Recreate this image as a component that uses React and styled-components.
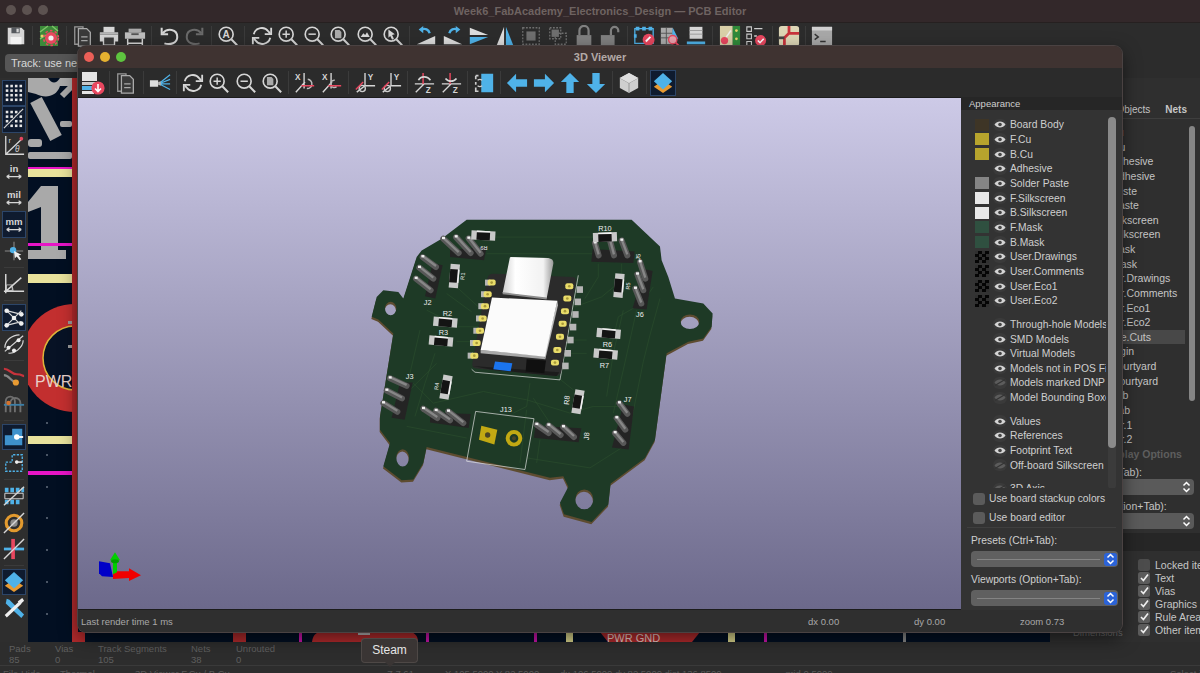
import React from "react";
import styled, { createGlobalStyle } from "styled-components";

const W = "#d6d6d6";
const B = "#4fb2e8";
const P = "#e8475f";

const Global = createGlobalStyle`
  html, body { margin: 0; padding: 0; background: #2a2a2a; }
  body { font-family: "Liberation Sans", Arial, sans-serif; overflow: hidden; }
`;

const Ic = ({ children, size = 22 }) => (
  <svg width={size} height={size} viewBox="0 0 24 24" fill="none">{children}</svg>
);

const Mag = ({ children, c = W }) => (
  <Ic>
    <circle cx="10" cy="10" r="7.6" stroke={c} strokeWidth="1.8" />
    <path d="M15.6 15.6 22 22" stroke={c} strokeWidth="2.2" />
    {children}
  </Ic>
);

const ZoomIn = () => <Mag><path d="M10 6v8M6 10h8" stroke={W} strokeWidth="1.6" /></Mag>;
const ZoomOut = () => <Mag><path d="M6 10h8" stroke={W} strokeWidth="1.6" /></Mag>;
const ZoomFit = () => <Mag><path d="M6.5 5.5h5l2 2v7h-7z" fill="#aaa" /></Mag>;
const ZoomObj = () => <Mag><path d="M5 13l3-4 2 2 2-3 3 5z" fill={W} /></Mag>;
const ZoomSel = () => <Mag><path d="M7 5l7 5-3 1 2 4-2 1-2-4-2 2z" fill={W} /></Mag>;
const Find = () => (
  <Mag>
    <text x="10" y="14" textAnchor="middle" fontSize="11" fontWeight="700" fill={W} fontFamily="Liberation Sans">A</text>
  </Mag>
);
const Refresh = () => (
  <Ic>
    <path d="M3 10a9 9 0 0 1 16-3l2 2.5M21 14a9 9 0 0 1-16 3l-2-2.5" stroke={W} strokeWidth="2" />
    <path d="M22 3v7h-7M2 21v-7h7" stroke={W} strokeWidth="2" />
  </Ic>
);
const Save = () => (
  <Ic>
    <path d="M3 3h15l3 3v15H3z" fill={W} />
    <path d="M7 3h9v6H7z" fill="#55595e" />
    <path d="M12.5 4h2.5v4h-2.5z" fill={W} />
    <path d="M6 13h12v8H6z" fill="#f2f2f2" />
  </Ic>
);
const BoardSetup = () => (
  <Ic size={24}>
    <path d="M3 2h18v20H3z" fill="#3c8a3a" />
    <path d="M3 8l8-6M3 15l6-4M15 2l6 5" stroke="#7fc46a" strokeWidth="1.4" />
    <circle cx="14" cy="14" r="6" fill={P} />
    <circle cx="14" cy="14" r="7.4" stroke={P} strokeWidth="1.6" strokeDasharray="2.5 2.3" />
    <circle cx="14" cy="14" r="2.6" fill="#f0f0f0" />
    <circle cx="5" cy="12" r="1.5" fill="#e6d36a" />
  </Ic>
);
const Pages = () => (
  <Ic>
    <path d="M3 2h9v19H3z" stroke="#999" strokeWidth="1.4" />
    <path d="M7 4h9l4 4v15H7z" fill="#3a3a3a" stroke="#aaa" strokeWidth="1.4" />
    <path d="M10 13h7M10 17h7" stroke="#aaa" strokeWidth="1.2" />
  </Ic>
);
const Printer = () => (
  <Ic>
    <path d="M6 2h12v6H6z" fill={W} />
    <path d="M2 8h20v10H2z" fill={W} />
    <path d="M6 13h12v9H6z" fill="#3a3a3a" stroke={W} strokeWidth="1.5" />
    <path d="M2 10h20" stroke="#777" />
  </Ic>
);
const Plotter = () => (
  <Ic>
    <path d="M5 4h14v4H5z" fill="#aaa" />
    <path d="M1 8h22v7H1z" fill="#bdbdbd" />
    <path d="M4 15v8M20 15v8M4 20h16" stroke={W} strokeWidth="1.6" />
    <path d="M8 10h8" stroke="#555" strokeWidth="2" />
  </Ic>
);
const Undo = ({ dim, flip }) => (
  <Ic>
    <g transform={flip ? "translate(24 0) scale(-1 1)" : undefined} stroke={dim ? "#6a6a6a" : W} strokeWidth="2.2">
      <path d="M5 9c5-6 16-5 16 4 0 7-8 9-14 7" />
      <path d="M4 3v7h7" />
    </g>
  </Ic>
);
const RotateBoard = ({ flip }) => (
  <Ic>
    <g transform={flip ? "translate(24 0) scale(-1 1)" : undefined}>
      <path d="M2 21L22 12v9z" fill="#ddd" />
      <path d="M16 9c-1-4-5-6-9-4" stroke={B} strokeWidth="2.6" />
      <path d="M9 1L4 5l5 4z" fill={B} />
    </g>
  </Ic>
);
const MirrorH = () => (
  <Ic><path d="M2 3l20 8H2z" fill="#ddd" /><path d="M2 13h20L2 21z" fill={B} /></Ic>
);
const MirrorV = () => (
  <Ic><path d="M11 2v20H3z" fill="#ddd" /><path d="M13 2v20h8z" fill={B} /></Ic>
);
const Group = ({ small }) => (
  <Ic>
    <path d={small ? "M3 3h12v12H3zM9 9h12v12H9z" : "M3 3h18v18H3z"} stroke="#6f6f6f" strokeWidth="1.4" strokeDasharray="2 1.5" />
    <path d={small ? "M5 5h8v8H5z" : "M7 7h10v10H7z"} fill="#6f6f6f" />
  </Ic>
);
const Lock = ({ open }) => (
  <Ic>
    <path d={open ? "M13 11V6a4 4 0 0 1 8 0v2" : "M7 11V6a5 5 0 0 1 10 0v5"} stroke="#808080" strokeWidth="2.4" />
    <path d={open ? "M2 11h15v11H2z" : "M4 11h16v11H4z"} fill="#808080" />
  </Ic>
);
const DrcBoard = () => (
  <Ic>
    <path d="M2 4h20v16H2z" stroke={B} strokeWidth="1.4" />
    <path d="M3 2h4v4H3zM10 2h4v4h-4zM17 2h4v4h-4zM1 10h3v4H1z" fill={B} />
    <circle cx="17" cy="16" r="6.5" fill={P} />
    <path d="M14 18l5-5" stroke="#fff" strokeWidth="2" />
  </Ic>
);
const Library = () => (
  <Ic>
    <path d="M2 3h13v18H2z" fill="#aaa" />
    <path d="M2 9h13M2 14h13M8 3v18" stroke="#555" />
    <path d="M15 3l6 12h-7z" fill={B} />
    <circle cx="15" cy="16" r="4.5" fill="#e8a0ac" stroke={P} strokeWidth="1.5" />
    <path d="M18 19l4 4" stroke={P} strokeWidth="2" />
  </Ic>
);
const Stackup = () => (
  <Ic>
    <path d="M5 2h14v13H5z" fill={W} />
    <path d="M5 6h14M5 10h14" stroke="#999" />
    <path d="M2 18h20v3H2z" fill={B} />
  </Ic>
);
const Schematic = () => (
  <Ic>
    <path d="M1 1h14v22H1z" fill="#d9d0a8" />
    <path d="M15 1h8v22h-8z" fill="#2f8a3a" />
    <path d="M3 20l10-14" stroke="#eee" strokeWidth="1.5" />
    <circle cx="6" cy="17" r="4" fill={P} />
    <circle cx="19" cy="6" r="1.5" fill="#e6d36a" />
    <circle cx="19" cy="15" r="1.5" fill="#e6d36a" />
  </Ic>
);
const Checklist = () => (
  <Ic>
    <path d="M2 2h5v5H2zM2 10h5v5H2zM2 18h5v5H2z" stroke="#ccc" strokeWidth="1.2" />
    <path d="M10 4h9M10 12h3" stroke="#ccc" strokeWidth="1.5" />
    <circle cx="17" cy="17" r="6" fill={P} />
    <path d="M14 17l2.4 2.4 4-4.4" stroke="#fff" strokeWidth="1.6" />
  </Ic>
);
const Router = () => (
  <Ic>
    <rect x="1" y="1" width="22" height="22" rx="3" fill="#ddd6b6" />
    <path d="M12 1v8l-5 5v9M12 9h11" stroke="#c8333c" strokeWidth="3" />
    <path d="M1 14h6" stroke="#444" strokeWidth="3" />
  </Ic>
);
const Terminal = () => (
  <Ic>
    <path d="M1 2h22v20H1z" fill="#a8a8a8" />
    <path d="M1 2h22v4H1z" fill="#d0d0d0" />
    <path d="M4 10l4 3-4 3M10 18h6" stroke="#333" strokeWidth="1.5" />
  </Ic>
);
const Export3d = () => (
  <Ic size={24}>
    <path d="M1 1h15v9H1z" fill="#e4e4e4" />
    <path d="M1 11h15v3H1z" fill="#c8c8c8" />
    <path d="M1 15h15v4H1z" fill={B} />
    <path d="M1 20h12v3H1z" fill="#e4e4e4" />
    <circle cx="17" cy="17" r="6.6" fill={P} />
    <path d="M17 13v7M14 17.5l3 3 3-3" stroke="#fff" strokeWidth="1.6" />
  </Ic>
);
const Raytrace = () => (
  <Ic>
    <path d="M1 9h9v7H1z" fill="#ddd" />
    <path d="M10 11l3-1v5l-3-1z" fill="#bbb" />
    <path d="M13 11L23 3M13 12l10-4M13 13h10M13 14l10 5" stroke={B} strokeWidth="1.3" />
  </Ic>
);
const RotAxis = ({ axis, alt }) => (
  <Ic>
    {axis === "X" && (
      <>
        <text x="1" y="9" fontSize="9" fontWeight="700" fill={W} fontFamily="Liberation Sans">X</text>
        <path d="M11 1v17M2 22l10-11" stroke={W} strokeWidth="1.5" />
        <path d={alt ? "M15 9a4 4 0 1 0 2 7" : "M15 8a5 5 0 1 1 -1 10"} stroke="#bbb" strokeWidth="1.6" />
        <path d="M8 15h14" stroke={P} strokeWidth="1.6" />
      </>
    )}
    {axis === "Y" && (
      <>
        <text x="15" y="9" fontSize="9" fontWeight="700" fill={W} fontFamily="Liberation Sans">Y</text>
        <path d="M12 1v14M12 15h11M3 22l9-7" stroke={W} strokeWidth="1.5" />
        <circle cx={alt ? 8 : 9} cy="18" r="3.4" stroke="#ccc" strokeWidth="1.5" />
        <path d="M2 19l8-8" stroke={P} strokeWidth="1.6" />
      </>
    )}
    {axis === "Z" && (
      <>
        <text x="14" y="23" fontSize="9" fontWeight="700" fill={W} fontFamily="Liberation Sans">Z</text>
        <path d="M3 22l9-9M2 13h21" stroke={W} strokeWidth="1.5" />
        <path d="M11 1v12" stroke={P} strokeWidth="1.6" />
        <path d={alt ? "M6 7c3 4 9 4 12 0" : "M6 9c2-5 10-5 13 0"} stroke={W} strokeWidth="1.8" />
      </>
    )}
  </Ic>
);
const Ortho = () => (
  <Ic>
    <path d="M9 2h13v20H9z" fill={B} />
    <path d="M3 4h3M3 4v4M3 11v3M3 17v4h3" stroke="#ccc" strokeWidth="1.8" />
    <path d="M5 9a4 4 0 0 1 5 0M5 15a4 4 0 0 0 5 0" stroke="#ccc" strokeWidth="1.4" />
  </Ic>
);
const Arrow = ({ rot }) => (
  <Ic>
    <path transform={`rotate(${rot} 12 12)`} d="M1 12l10-10v6h12v8H11v6z" fill={B} />
  </Ic>
);
const Cube = () => (
  <Ic>
    <path d="M12 1l10 5.5v11L12 23 2 17.500V6.500z" fill="#cfcfcf" />
    <path d="M12 12l10-5.500M12 12L2 6.500M12 12v11" stroke="#8f8f8f" strokeWidth="1" />
    <path d="M12 1l10 5.500-10 5.500L2 6.500z" fill="#dedede" />
  </Ic>
);
const Layers = () => (
  <Ic>
    <path d="M12 9l10 7-10 7-10-7z" fill="#e89a32" />
    <path d="M12 1l10 9-10 9-10-9z" fill={B} />
  </Ic>
);
const DotGrid = ({ slash }) => (
  <Ic>
    {[3, 8, 13, 18].flatMap((y) => [3, 8, 13, 18].map((x) => <rect key={`${x}-${y}`} x={x} y={y} width="2.8" height="2.8" fill="#e6e6e6" />))}
    {slash && <path d="M1 23L23 1" stroke="#0f1b2f" strokeWidth="3" />}
    {slash && <path d="M1 22L22 1" stroke={W} strokeWidth="1.3" />}
  </Ic>
);
const Polar = () => (
  <Ic>
    <path d="M3 1v20h20M3 21L20 5" stroke={W} strokeWidth="1.4" />
    <circle cx="20" cy="4" r="2" fill={P} />
    <text x="6" y="9" fontSize="8" fill={W} fontFamily="Liberation Sans">r</text>
    <text x="13" y="19" fontSize="9" fontStyle="italic" fill={W} fontFamily="Liberation Sans">θ</text>
  </Ic>
);
const Unit = ({ label }) => (
  <Ic>
    <text x="12" y="12" textAnchor="middle" fontSize="10.500" fontWeight="700" fill={W} fontFamily="Liberation Sans">{label}</text>
    <path d="M4 17h16M4 17l3-2M4 17l3 2M20 17l-3-2M20 17l-3 2" stroke={W} strokeWidth="1.3" />
  </Ic>
);
const CrossCursor = () => (
  <Ic>
    <path d="M12 2v20M2 12h20" stroke="#888" strokeWidth="1.2" />
    <circle cx="11" cy="11" r="3.5" fill={B} />
    <path d="M12 12l8 4-3 1 3 4-2 1-3-4-2 2z" fill="#eee" />
  </Ic>
);
const Angle = () => (
  <Ic>
    <path d="M3 1v21M1 20h22M3 20L20 5" stroke={W} strokeWidth="1.6" />
    <path d="M9 14a9 9 0 0 1 2 6" stroke={W} />
    <rect x="4" y="13" width="6" height="6" stroke={W} strokeWidth="0.8" />
  </Ic>
);
const Ratsnest = () => (
  <Ic>
    <path d="M4 4l16 16M20 4L4 20M4 4l16 4M4 20l16 -4" stroke={W} strokeWidth="1.3" />
    {[[4, 4], [20, 8], [12, 12], [4, 20], [20, 18]].map(([x, y]) => <circle key={x + y} cx={x} cy={y} r="2.5" fill="#eee" />)}
  </Ic>
);
const CurvedNest = () => (
  <Ic>
    <path d="M2 20L22 3M6 22c6 1 16-6 16-14M2 16C2 8 10 2 18 2" stroke={W} strokeWidth="1.3" />
    <circle cx="6" cy="16" r="2.2" fill="#eee" />
    <circle cx="17" cy="8" r="2.2" fill="#eee" />
    <circle cx="12" cy="19" r="2.2" fill="#eee" />
  </Ic>
);
const NetColors = () => (
  <Ic>
    <path d="M1 3c6 0 8 6 14 6s6 2 8 2" stroke="#c8333c" strokeWidth="2.4" />
    <path d="M1 10c6 0 7 7 12 7" stroke="#888" strokeWidth="2.4" />
    <circle cx="14" cy="18" r="3.4" fill="#e89a32" />
  </Ic>
);
const DimVias = () => (
  <Ic>
    <path d="M3 22V10a5 5 0 0 1 10 0v12" stroke="#6f6f6f" strokeWidth="2" />
    <path d="M8 22V12a3 3 0 0 1 11 0v10" stroke="#6f6f6f" strokeWidth="2" />
    <path d="M1 14h22" stroke="#3b7ea6" strokeWidth="2" />
    <circle cx="6" cy="12" r="2.400" fill="#d4722c" />
  </Ic>
);
const ZoneFill = () => (
  <Ic>
    <path d="M2 10h8V3h11v18H2z" fill="#3f92cc" />
    <circle cx="15" cy="12" r="3" fill="#fff" />
    <path d="M15 12h7" stroke="#fff" strokeWidth="2" />
  </Ic>
);
const ZoneOutline = () => (
  <Ic>
    <path d="M3 11h7V3h11v18H3z" stroke={B} strokeWidth="1.5" strokeDasharray="2.500 1.500" />
    <circle cx="15" cy="11" r="2" fill="#eee" />
    <path d="M15 11h6" stroke="#eee" strokeWidth="1.6" />
  </Ic>
);
const PadsSlash = () => (
  <Ic>
    <path d="M2 3h4v5H2zM8 3h4v5H8zM14 3h4v5h-4zM20 3h3v5h-3zM2 16h4v5H2zM8 16h4v5H8zM14 16h4v5h-4z" fill={B} />
    <path d="M2 9h20v6H2z" stroke="#ddd" strokeWidth="1" />
    <path d="M1 22L23 2" stroke={W} strokeWidth="1.5" />
  </Ic>
);
const ViaSlash = () => (
  <Ic>
    <circle cx="12" cy="12" r="8.500" stroke="#e39a2e" strokeWidth="3.400" />
    <circle cx="12" cy="12" r="4" fill="#8a8a8a" />
    <path d="M1 23L23 1" stroke={W} strokeWidth="1.5" />
  </Ic>
);
const TrackSlash = () => (
  <Ic>
    <path d="M1 12h22" stroke={B} strokeWidth="3" />
    <path d="M11 1v22" stroke={P} strokeWidth="4" />
    <path d="M1 23L23 1" stroke={W} strokeWidth="1.5" />
  </Ic>
);
const Wrench = () => (
  <Ic>
    <path d="M4 2l3 1 16 16-3 4L3 7z" fill={B} />
    <path d="M3 21L19 6" stroke="#eee" strokeWidth="3.400" />
    <path d="M21 1l2 3-4 4-3-3z" fill="#eee" />
  </Ic>
);

const Stepper = () => (
  <svg width="9" height="12" viewBox="0 0 9 12" fill="none" stroke="#fff" strokeWidth="1.5">
    <path d="M1.500 4.500L4.500 1.500l3 3M1.500 7.500l3 3 3-3" />
  </svg>
);
const Eye = ({ off }) => (
  <svg width="12" height="9" viewBox="0 0 12 9">
    <path d="M0.500 4.500C3 0.500 9 0.500 11.500 4.500 9 8.500 3 8.500 0.500 4.500z" fill={off ? "#5c5c5c" : "#d4d4d4"} />
    {off ? <path d="M1 7.500L11 1.500" stroke="#333" strokeWidth="1.200" /> : <circle cx="6" cy="4.500" r="1.800" fill="#444" />}
  </svg>
);
const Check = () => (
  <svg width="9" height="9" viewBox="0 0 9 9" fill="none" stroke="#eee" strokeWidth="1.700">
    <path d="M1 5l2.400 2.500L8 1.500" />
  </svg>
);

const Desktop = styled.div`
  position: relative;
  width: 1200px;
  height: 673px;
  overflow: hidden;
`;
const EditorWindow = styled.div`
  display: flex;
  flex-direction: column;
  height: 673px;
  background: #2c2c2c;
`;
const EditorTitle = styled.div`
  position: relative;
  flex: 0 0 23px;
  box-sizing: border-box;
  display: flex;
  align-items: center;
  justify-content: center;
  background: #33282a;
  border-bottom: 1px solid #262020;
  color: #6e6361;
  font-size: 11px;
  font-weight: 700;
`;
const Lights = styled.div`
  position: absolute;
  left: ${(p) => p.$left}px;
  top: ${(p) => p.$top}px;
  display: flex;
  gap: 6px;
`;
const Light = styled.span`
  width: 10px;
  height: 10px;
  border-radius: 50%;
  background: ${(p) => p.$color};
`;
const Toolbar = styled.div`
  display: flex;
  align-items: center;
  flex: 0 0 ${(p) => p.$height}px;
  min-height: 0;
  padding-left: ${(p) => p.$pad}px;
  background: ${(p) => p.$bg || "#2c2c2c"};
`;
const Tool = styled.div`
  flex: 0 0 26.3px;
  height: 26px;
  display: flex;
  align-items: center;
  justify-content: center;
  box-sizing: border-box;
  ${(p) => p.$on && "background: #0f1b2f; border: 1px solid #2c4568;"}
`;
const Sep = styled.div`
  flex: 0 0 7px;
  display: flex;
  justify-content: center;
  align-self: stretch;
  &::after {
    content: "";
    width: 1px;
    margin: 3px 0;
    background: #3b3b3b;
  }
`;
const AuxBar = styled.div`
  flex: 0 0 30px;
  display: flex;
  align-items: center;
  padding-left: 5px;
  box-sizing: border-box;
  background: #2c2c2c;
`;
const TrackSelect = styled.div`
  width: 110px;
  height: 18px;
  line-height: 18px;
  padding-left: 6px;
  box-sizing: border-box;
  border-radius: 4px;
  background: #565656;
  color: #d8d8d8;
  font-size: 11px;
  white-space: nowrap;
`;
const EditorBody = styled.div`
  flex: 1;
  display: flex;
  min-height: 0;
`;
const LeftTools = styled.div`
  flex: 0 0 28px;
  display: flex;
  flex-direction: column;
  align-items: center;
  padding-top: 2px;
  box-sizing: border-box;
  background: #2e2e2e;
`;
const VTool = styled(Tool)`
  flex: 0 0 26.3px;
  width: 24px;
`;
const VSep = styled.div`
  flex: 0 0 7px;
  width: 20px;
  display: flex;
  align-items: center;
  &::after {
    content: "";
    height: 1px;
    width: 100%;
    background: #3b3b3b;
  }
`;
const PcbSvg = styled.svg`
  flex: 1;
  display: block;
  min-width: 0;
  height: 564px;
`;
const SidePanel = styled.div`
  position: relative;
  flex: 0 0 150px;
  min-width: 0;
  overflow: hidden;
  display: flex;
  flex-direction: column;
  background: #2f2f2f;
  color: #c6c6c6;
  font-size: 10.500px;
`;
const Tabs = styled.div`
  display: flex;
  justify-content: flex-end;
  gap: 15px;
  padding: 26px 13px 0 0;
  height: 41px;
  box-sizing: border-box;
  border-bottom: 1px solid #3e3e3e;
  font-size: 10px;
`;
const Tab = styled.span`
  font-weight: ${(p) => (p.$active ? 700 : 400)};
`;
const LayerList = styled.div`
  position: relative;
  padding-top: 6px;
`;
const LayerRow = styled.div`
  height: 14.640px;
  line-height: 14.640px;
  width: 135px;
  padding-left: 52px;
  box-sizing: border-box;
  white-space: nowrap;
  color: ${(p) => (p.$dim ? "#5e5e5e" : "inherit")};
  font-weight: ${(p) => (p.$dim ? 700 : 400)};
  background: ${(p) => (p.$active ? "#484848" : "transparent")};
`;
const SideScroll = styled.div`
  position: absolute;
  right: 5px;
  top: 7px;
  width: 6px;
  height: 275px;
  border-radius: 3px;
  background: #858585;
`;
const SideLabel = styled.div`
  padding: 5px 0 0 4px;
  line-height: 12px;
  white-space: nowrap;
`;
const SideSelect = styled.div`
  align-self: flex-end;
  flex: 0 0 16px;
  width: 140px;
  margin: 1px 6px 0 0;
  border-radius: 4px;
  background: #5a5a5a;
  display: flex;
  align-items: center;
  justify-content: flex-end;
  padding-right: 3px;
  box-sizing: border-box;
`;
const DarkBand = styled.div`
  flex: 0 0 18px;
  margin-top: 4px;
  background: #262626;
`;
const DimensionLabel = styled.div`
  position: absolute;
  left: 23px;
  top: 549px;
  color: #6a6a6a;
  font-size: 9.500px;
`;
const ChecksList = styled.div`
  display: flex;
  flex-direction: column;
  padding: 7px 0 0 88px;
`;
const CheckRow = styled.div`
  display: flex;
  align-items: center;
  gap: 5px;
  height: 13px;
  white-space: nowrap;
  font-size: 10.500px;
`;
const CheckBox = styled.span`
  flex: 0 0 12px;
  height: 12px;
  border-radius: 2.500px;
  background: ${(p) => (p.$on ? "#5c5c5c" : "#4c4c4c")};
  display: flex;
  align-items: center;
  justify-content: center;
`;
const StatusBar = styled.div`
  flex: 0 0 31px;
  min-height: 0;
  overflow: hidden;
  display: flex;
  flex-direction: column;
  background: #2d2d2d;
  color: #5f5f5f;
  font-size: 9.500px;
`;
const StatRow = styled.div`
  flex: 0 0 23px;
  box-sizing: border-box;
  display: flex;
  padding-left: 9px;
  border-bottom: 1px solid #3a3a3a;
`;
const Stat = styled.div`
  width: ${(p) => p.$w}px;
  line-height: 11px;
  padding-top: 1px;
`;
const InfoRow = styled.div`
  display: flex;
  padding: 2px 0 0 3px;
  white-space: nowrap;
  color: #5a5a5a;
`;
const InfoCell = styled.span`
  flex: 0 0 ${(p) => p.$w}px;
`;
const Viewer = styled.div`
  position: absolute;
  left: 78px;
  top: 46px;
  width: 1044px;
  height: 586px;
  display: flex;
  flex-direction: column;
  border-radius: 8px;
  overflow: hidden;
  background: #2e2e2e;
  box-shadow: 0 0 0 1px #4a4242, 0 6px 18px rgba(0, 0, 0, 0.55);
`;
const ViewerTitle = styled.div`
  position: relative;
  flex: 0 0 22px;
  display: flex;
  align-items: center;
  justify-content: center;
  background: #3f3331;
  color: #b3aaa7;
  font-size: 11px;
  font-weight: 700;
`;
const ViewerBody = styled.div`
  flex: 1;
  display: flex;
  min-height: 0;
`;
const Scene = styled.div`
  flex: 1;
  min-width: 0;
  box-sizing: border-box;
  background: linear-gradient(#cdcae7, #6c698b);
  border-top: 1px solid #1c1c1c;
  border-bottom: 1px solid #1c1c1c;
`;
const SceneSvg = styled.svg`
  display: block;
  width: 100%;
  height: 100%;
`;
const Appearance = styled.div`
  position: relative;
  flex: 0 0 161px;
  min-width: 0;
  display: flex;
  flex-direction: column;
  background: #333;
  color: #cfcfcf;
  font-size: 10.300px;
`;
const PanelHead = styled.div`
  flex: 0 0 13px;
  line-height: 13px;
  padding-left: 8px;
  background: #262626;
  font-size: 9.500px;
`;
const ControlList = styled.div`
  position: relative;
  flex: 0 0 378px;
  margin-bottom: 1px;
  overflow: hidden;
  padding-top: 7.500px;
  box-sizing: border-box;
`;
const ControlRow = styled.div`
  display: flex;
  align-items: center;
  height: 14.670px;
  white-space: nowrap;
  width: 145px;
  overflow: hidden;
`;
const Swatch = styled.span`
  flex: 0 0 14px;
  height: 12px;
  margin: 0 4px 0 14px;
  background: ${(p) => p.$color || "transparent"};
  ${(p) => p.$dither && "background: repeating-conic-gradient(#050505 0 25%, #2f2f2f 0 50%) 0 0 / 7px 6px;"}
`;
const EyeSlot = styled.span`
  flex: 0 0 14px;
  height: 12px;
  border-radius: 6px;
  margin-right: 3px;
  display: flex;
  align-items: center;
  justify-content: center;
  background: #3a3a3a;
`;
const GroupGap = styled.div`
  height: ${(p) => p.$h}px;
`;
const ScrollTrack = styled.div`
  position: absolute;
  left: 147px;
  top: 7px;
  width: 8px;
  height: 372px;
  background: #3b3b3b;
  border-radius: 4px;
`;
const PanelScroll = styled.div`
  position: absolute;
  left: 147px;
  top: 7px;
  width: 8px;
  height: 331px;
  border-radius: 4px;
  background: #8a8a8a;
`;
const PanelCheck = styled.div`
  display: flex;
  align-items: center;
  gap: 4px;
  padding-left: 12px;
  flex: 0 0 19px;
`;
const PanelBox = styled.span`
  width: 12px;
  height: 12px;
  border-radius: 3px;
  background: #5b5b5b;
`;
const PanelRule = styled.div`
  flex: 0 0 1px;
  margin: 0 6px 6px;
  background: #3f3f3f;
`;
const PanelLabel = styled.div`
  padding-left: 10px;
  flex: 0 0 13px;
  line-height: 13px;
`;
const SelectBox = styled.div`
  position: relative;
  flex: 0 0 16px;
  margin: 4px 4px 6px 10px;
  border-radius: 4px;
  background: #606060;
  display: flex;
  align-items: center;
  justify-content: flex-end;
  &::before {
    content: "";
    position: absolute;
    left: 6px;
    right: 18px;
    top: 8px;
    height: 1px;
    background: #848484;
  }
`;
const BlueStep = styled.span`
  width: 13px;
  height: 13px;
  margin-right: 1px;
  border-radius: 3px;
  background: #2b63d8;
  display: flex;
  align-items: center;
  justify-content: center;
`;
const ViewerStatus = styled.div`
  flex: 0 0 22px;
  display: flex;
  align-items: center;
  background: #2f2f2f;
  color: #a8a8a8;
  font-size: 9.500px;
  padding-left: 3px;
`;
const StatusCell = styled.div`
  width: ${(p) => p.$w}px;
`;
const Tooltip = styled.div`
  position: absolute;
  left: 362px;
  top: 639px;
  width: 55px;
  height: 23px;
  line-height: 22px;
  text-align: center;
  border-radius: 3px;
  background: #3a3534;
  box-shadow: 0 0 0 1px #4e4846;
  color: #e6e6e6;
  font-size: 12px;
  &::after {
    content: "";
    position: absolute;
    left: 23px;
    bottom: -5px;
    border: solid transparent;
    border-width: 5px 5px 0;
    border-top-color: #3a3534;
  }
`;

const TraceLines = [
  "M260 250l75 55M290 230l65 60M400 80h300M380 130h320M715 160v40l-40 65M785 160v50l-60 50-80 30",
  "M900 265l-30 110-20 80-30 150-20 100-110 70-190-30M880 230l-35 50-70 40-30 130",
  "M160 520l60 60 150-35 130 25 130 40 70-20h90M510 520l-10 70-40 20M520 565l60 90M590 500l50 40",
  "M290 395h70M275 350h80M680 390h-60M680 430h-50M225 430l-30 90-30 100M140 650l180 35M500 600l-20 160",
  "M540 690l-10 70M130 560l100-100M790 300l-30 130-20 130M830 300l-40 180-30 130",
  "M180 360l-30 130M200 300l60 30",
];

const Resistor = ({ x, y, rot = 0 }) => (
  <g transform={`translate(${x} ${y}) rotate(${rot})`}>
    <rect x="-36" y="-14" width="72" height="28" fill="#c9c9c9" />
    <rect x="-20" y="-14" width="40" height="6" fill="#f0f0f0" />
    <rect x="-20" y="-9" width="40" height="23" fill="#141414" />
  </g>
);

const Header = ({ body, pins }) => (
  <g>
    <polygon points={body} fill="#242424" />
    {pins.map(([x1, y1, x2, y2]) => (
      <g key={`${x1}-${y1}`}>
        <path d={`M${x1} ${y1}L${x2} ${y2}`} stroke="#585858" strokeWidth="18" strokeLinecap="round" />
        <path d={`M${x1} ${y1 - 3}L${x2} ${y2 - 3}`} stroke="#878787" strokeWidth="7" />
        <rect x={x1 - 4} y={y1 - 6} width="9" height="7" fill="#f0f0f0" />
      </g>
    ))}
  </g>
);

const Silk = ({ x, y, rot = 0, children, size = 22 }) => (
  <text
    transform={`translate(${x} ${y}) rotate(${rot})`}
    textAnchor="middle"
    fontSize={size}
    fill="#efefef"
    fontFamily="Liberation Sans"
  >
    {children}
  </text>
);

const hole = (cx, cy, rx, ry) =>
  `M${cx - rx} ${cy}a${rx} ${ry} 0 1 0 ${2 * rx} 0a${rx} ${ry} 0 1 0 ${-2 * rx} 0z`;

const outline =
  "M320 28L815 28L900 108L905 150L925 200L945 265L1030 280L1058 310L1055 350L1030 385L985 395L920 430L885 690L855 745L752 822L745 885L695 938L612 915L600 880L625 832L610 800L570 805L200 712L190 760L160 810L125 812L70 770L90 700L60 660L60 620L100 370L55 328L35 320L50 260L70 240L115 245L130 265L170 140L185 120L245 85Z" +
  hole(92, 295, 17, 20) +
  hole(990, 335, 28, 22) +
  hole(128, 745, 19, 26) +
  hole(673, 870, 27, 30);

const leftPads = [[395, 217], [383, 252], [375, 288], [368, 325], [360, 362], [350, 399], [343, 437]];
const rightPads = [[628, 228], [622, 265], [615, 303], [608, 341], [600, 380], [592, 420], [585, 458]];

function Board() {
  return (
    <g transform="translate(360 210) scale(0.3333)">
      <path d={outline} transform="translate(-1 7)" fill="#5e4c30" fillRule="evenodd" />
      <path d={outline} fill="#1e3a26" fillRule="evenodd" />
      {TraceLines.map((d) => (
        <path key={d} d={d} stroke="#2b4f2e" strokeWidth="1.800" fill="none" />
      ))}

      <Header body="270,118 380,110 372,150 270,140" pins={[[250, 85, 296, 128], [288, 80, 332, 128], [326, 84, 362, 130]]} />
      <Header body="218,158 248,165 226,265 195,258" pins={[[188, 140, 228, 170], [178, 172, 220, 205], [168, 205, 212, 240]]} />
      <Header body="120,518 158,518 134,630 95,624" pins={[[90, 505, 140, 528], [80, 542, 126, 566], [70, 580, 112, 606]]} />
      <Header body="210,608 332,613 326,655 210,638" pins={[[190, 597, 232, 625], [228, 603, 270, 632], [265, 605, 310, 640]]} />
      <Header body="698,116 824,123 820,158 694,154" pins={[[705, 98, 716, 135], [750, 90, 762, 135], [785, 90, 802, 135]]} />
      <Header body="852,176 878,182 860,298 818,294" pins={[[840, 155, 856, 205], [832, 192, 850, 240], [826, 235, 844, 280]]} />
      <Header body="790,584 822,590 806,720 756,714" pins={[[778, 580, 802, 612], [770, 625, 796, 660], [765, 670, 790, 700]]} />
      <Header body="526,648 664,656 656,698 522,684" pins={[[530, 645, 566, 670], [566, 647, 602, 676], [610, 652, 642, 682]]} />

      <Resistor x={370} y={75} rot={3} />
      <Resistor x={735} y={80} rot={-2} />
      <Resistor x={283} y={197} rot={95} />
      <Resistor x={777} y={226} rot={95} />
      <Resistor x={256} y={336} rot={5} />
      <Resistor x={243} y={393} rot={5} />
      <Resistor x={746} y={370} rot={5} />
      <Resistor x={737} y={432} rot={5} />
      <Resistor x={258} y={532} rot={100} />
      <Resistor x={654} y={576} rot={100} />

      <path d="M655 195L600 510L345 487L335 478" stroke="#e8e8e8" strokeWidth="2" fill="none" />
      <path d="M400 190L638 200Q650 202 648 215L604 485Q600 500 585 498L350 476Q335 474 337 460L382 205Q385 190 400 190Z" fill="#2b2b2b" />
      <path d="M400 480L590 498L598 487L338 468Z" fill="#1c1c1c" />
      {leftPads.map(([x, y]) => (
        <g key={`l${y}`}>
          <rect x={x - 20} y={y - 9} width="16" height="18" fill="#b5b5b5" />
          <rect x={x - 12} y={y - 9} width="24" height="18" rx="6" fill="#e9dc6a" />
          <circle cx={x} cy={y} r="4" fill="#a8983a" />
        </g>
      ))}
      {rightPads.map(([x, y]) => (
        <g key={`r${y}`}>
          <rect x={x + 22} y={y} width="19" height="20" fill="#b5b5b5" />
          <rect x={x - 12} y={y - 9} width="24" height="18" rx="6" fill="#e9dc6a" />
          <circle cx={x} cy={y} r="4" fill="#a8983a" />
        </g>
      ))}

      <defs>
        <linearGradient id="usb" x1="0" x2="1" y1="0" y2="0">
          <stop offset="0" stopColor="#cfcfcf" />
          <stop offset="0.25" stopColor="#ffffff" />
          <stop offset="0.8" stopColor="#f2f2f2" />
          <stop offset="1" stopColor="#9a9a9a" />
        </linearGradient>
      </defs>
      <path d="M452 140L565 143Q582 146 580 160L560 265L428 248L448 150Q449 140 452 140Z" fill="url(#usb)" />
      <path d="M428 246L560 262V268L428 252Z" fill="#8d8d8d" />
      <path d="M592 272L594 285L556 448L553 438Z" fill="#b9b9b9" />
      <path d="M362 420L553 438L556 448L362 430Z" fill="#a9a9a9" />
      <path d="M396 262L592 272L555 440L362 420Z" fill="#fbfbfb" />
      <path d="M405 455L457 460L452 484L400 478Z" fill="#1b74ee" />
      <path d="M500 448L558 452L553 490L497 485Z" fill="#101010" />

      <path d="M347 605L522 627L495 780L320 755Z" stroke="#e8e8e8" strokeWidth="2" fill="none" />
      <path d="M364 648L412 660L403 705L357 690Z" fill="#c2a913" />
      <circle cx="383" cy="676" r="8" fill="#4a4526" />
      <circle cx="462" cy="686" r="19" stroke="#c2a913" strokeWidth="12" fill="none" />
      <circle cx="462" cy="686" r="6" fill="#4a4526" />

      <Silk x={372} y={106} rot={180} size={17}>R9</Silk>
      <Silk x={735} y={62}>R10</Silk>
      <Silk x={314} y={198} rot={-85} size={17}>R1</Silk>
      <Silk x={262} y={318}>R2</Silk>
      <Silk x={250} y={374}>R3</Silk>
      <Silk x={742} y={410}>R6</Silk>
      <Silk x={733} y={474}>R7</Silk>
      <Silk x={236} y={530} rot={-85} size={17}>R4</Silk>
      <Silk x={628} y={572} rot={-85}>R8</Silk>
      <Silk x={810} y={228} rot={-85} size={17}>R5</Silk>
      <Silk x={203} y={285}>J2</Silk>
      <Silk x={149} y={506}>J3</Silk>
      <Silk x={841} y={140} rot={-85} size={18}>J5</Silk>
      <Silk x={840} y={322}>J6</Silk>
      <Silk x={803} y={576}>J7</Silk>
      <Silk x={687} y={680} rot={-85}>J8</Silk>
      <Silk x={438} y={607}>J13</Silk>
    </g>
  );
}

function AxisGizmo() {
  return (
    <g>
      <path d="M99 562l11 2 3 14-11-1-3-3z" fill="#0000c8" />
      <path d="M113 572h16v-3l12 7-12 6v-3l-16 1z" fill="#f00000" />
      <path d="M113 575v-14h-3l5-8 5 8h-3v12z" fill="#00d000" />
      <ellipse cx="115" cy="562" rx="4" ry="2" fill="#00a000" />
    </g>
  );
}

const Dots = [422, 454, 486, 517, 549, 581, 613];

function PcbLayout() {
  return (
    <PcbSvg viewBox="28 78 1022 564" preserveAspectRatio="none">
      <rect x="28" y="78" width="1022" height="564" fill="#020f22" />
      <path d="M28 78h20c4 6 8 6 12 0h12v8H60c-4 12-16 12-24 8l-8-2z" fill="#a9a9a9" />
      <path d="M36 100l20 38" stroke="#a9a9a9" strokeWidth="13" />
      <path d="M62 96l10-10" stroke="#a9a9a9" strokeWidth="6" />
      <rect x="60" y="121" width="12" height="6" rx="2" fill="#a9a9a9" />
      <rect x="28" y="139" width="14" height="8" rx="3" fill="#a9a9a9" />
      <rect x="28" y="152" width="44" height="7" rx="2" fill="#a9a9a9" />
      <rect x="28" y="168" width="44" height="9" fill="#e8e29c" />
      <rect x="28" y="167" width="44" height="2" fill="#e715c6" />
      <path d="M41 186h17v64h8v9H28v-9h13v-43l-13 5v-10z" fill="#a9a9a9" />
      <rect x="28" y="243" width="44" height="3" fill="#e715c6" />
      <rect x="28" y="274" width="44" height="9" fill="#e8e29c" />
      <circle cx="75" cy="358" r="54" fill="#c22f2f" />
      <circle cx="75" cy="358" r="32" stroke="#dfb33a" strokeWidth="1.500" fill="#071225" />
      <rect x="68" y="345" width="8" height="3" fill="#999" />
      <rect x="68" y="321" width="8" height="3" fill="#999" />
      <text x="35" y="387" fontSize="16" fill="#e8cfc9" fontFamily="Liberation Sans">PWR</text>
      <rect x="28" y="436" width="44" height="8" fill="#e8e29c" />
      <rect x="28" y="471" width="44" height="4" fill="#e715c6" />
      {Dots.map((y) => <rect key={y} x="46" y={y} width="2" height="2" fill="#4a5565" />)}
      <rect x="72" y="78" width="6" height="564" fill="#b12a2c" />
      <rect x="72" y="632" width="13" height="10" fill="#b12a2c" />
      <rect x="233" y="632" width="13" height="10" fill="#b12a2c" />
      <rect x="299" y="632" width="3" height="10" fill="#c915a8" />
      <path d="M312 642c1-8 5-10 10-10h86c6 0 10 3 10 10z" fill="#b12a2c" />
      <rect x="358" y="632" width="12" height="3" fill="#bbb" />
      <rect x="426" y="632" width="3" height="10" fill="#c915a8" />
      <rect x="534" y="632" width="3" height="10" fill="#c915a8" />
      <rect x="566" y="632" width="7" height="10" fill="#d9d48c" />
      <path d="M600 632h100l-8 10h-84z" fill="#b12a2c" />
      <text x="607" y="642" fontSize="11" fill="#e8cfc9" fontFamily="Liberation Sans">PWR  GND</text>
      <rect x="728" y="632" width="7" height="10" fill="#d9d48c" />
      <rect x="764" y="632" width="3" height="10" fill="#c915a8" />
      <rect x="903" y="632" width="3" height="10" fill="#888" />
    </PcbSvg>
  );
}

const topTools = [
  [Save], "|", [BoardSetup], "|", [Pages], [Printer], [Plotter], "|", [Undo], [Undo, { dim: true, flip: true }], "|", [Find], "|",
  [Refresh], [ZoomIn], [ZoomOut], [ZoomFit], [ZoomObj], [ZoomSel], "|",
  [RotateBoard], [RotateBoard, { flip: true }], [MirrorH], [MirrorV], [Group], [Group, { small: true }], [Lock], [Lock, { open: true }], "|",
  [DrcBoard], [Library], [Stackup], "|", [Schematic], [Checklist], "|", [Router], "|", [Terminal],
];

const viewerTools = [
  [Export3d], "|", [Pages], "|", [Raytrace], "|", [Refresh], [ZoomIn], [ZoomOut], [ZoomFit], "|",
  [RotAxis, { axis: "X" }], [RotAxis, { axis: "X", alt: true }], "|", [RotAxis, { axis: "Y" }], [RotAxis, { axis: "Y", alt: true }], "|",
  [RotAxis, { axis: "Z" }], [RotAxis, { axis: "Z", alt: true }], "|", [Ortho], "|",
  [Arrow, { rot: 0 }], [Arrow, { rot: 180 }], [Arrow, { rot: 90 }], [Arrow, { rot: 270 }], "|", [Cube], "|", [Layers, {}, true],
];

const leftTools = [
  [DotGrid, {}, true], [DotGrid, { slash: true }, true], [Polar], [Unit, { label: "in" }], [Unit, { label: "mil" }], [Unit, { label: "mm" }, true], [CrossCursor], "|", [Angle], "|",
  [Ratsnest, {}, true], [CurvedNest], "|", [NetColors], [DimVias], "|", [ZoneFill, {}, true], [ZoneOutline], "|",
  [PadsSlash], [ViaSlash], [TrackSlash], "|", [Layers, {}, true], [Wrench],
];

const renderTools = (tools, Item, Divider) =>
  tools.map((t, i) => {
    if (t === "|") return <Divider key={i} />;
    const [C, props, on] = t;
    return <Item key={i} $on={on}><C {...props} /></Item>;
  });

const sideLayers = [
  "F.Cu", "B.Cu", "F.Adhesive", "B.Adhesive", "F.Paste", "B.Paste", "F.Silkscreen", "B.Silkscreen", "F.Mask", "B.Mask",
  "User.Drawings", "User.Comments", "User.Eco1", "User.Eco2", "Edge.Cuts", "Margin", "F.Courtyard", "B.Courtyard", "F.Fab", "B.Fab", "User.1", "User.2",
];
const sideChecks = [["Locked items", false], ["Text", true], ["Vias", true], ["Graphics", true], ["Rule Areas", true], ["Other items", true]];

const colorRows = [
  ["Board Body", "#3e3526"], ["F.Cu", "#b7a42d"], ["B.Cu", "#b7a42d"], ["Adhesive", null], ["Solder Paste", "#858585"],
  ["F.Silkscreen", "#e8e8e8"], ["B.Silkscreen", "#e8e8e8"], ["F.Mask", "#2f5040"], ["B.Mask", "#2f5040"],
  ["User.Drawings", "dither"], ["User.Comments", "dither"], ["User.Eco1", "dither"], ["User.Eco2", "dither"],
];
const modelRows = [
  ["Through-hole Models"], ["SMD Models"], ["Virtual Models"], ["Models not in POS File"], ["Models marked DNP", true], ["Model Bounding Boxes", true],
];
const textRows = [["Values"], ["References"], ["Footprint Text"], ["Off-board Silkscreen", true]];

const ViewRow = ({ label, color, off }) => (
  <ControlRow>
    <Swatch $color={color === "dither" ? null : color} $dither={color === "dither"} />
    <EyeSlot><Eye off={off} /></EyeSlot>
    {label}
  </ControlRow>
);

export default function App() {
  return (
    <Desktop>
      <Global />
      <EditorWindow>
        <EditorTitle>
          <Lights $left={6} $top={5}>
            <Light $color="#5c5250" />
            <Light $color="#5c5250" />
            <Light $color="#5c5250" />
          </Lights>
          Week6_FabAcademy_Electronics_Design — PCB Editor
        </EditorTitle>
        <Toolbar $height={25} $pad={3}>{renderTools(topTools, Tool, Sep)}</Toolbar>
        <AuxBar><TrackSelect>Track: use netclass width</TrackSelect></AuxBar>
        <EditorBody>
          <LeftTools>{renderTools(leftTools, VTool, VSep)}</LeftTools>
          <PcbLayout />
          <SidePanel>
            <Tabs><Tab>Objects</Tab><Tab $active>Nets</Tab></Tabs>
            <LayerList>
              {sideLayers.map((l) => (
                <LayerRow key={l} $active={l === "Edge.Cuts"}>{l}</LayerRow>
              ))}
              <LayerRow $dim>Display Options</LayerRow>
              <SideScroll />
            </LayerList>
            <SideLabel>Presets (Ctrl+Tab):</SideLabel>
            <SideSelect><Stepper /></SideSelect>
            <SideLabel>Viewports (Option+Tab):</SideLabel>
            <SideSelect><Stepper /></SideSelect>
            <DarkBand />
            <ChecksList>
              {sideChecks.map(([label, on]) => (
                <CheckRow key={label}>
                  <CheckBox $on={on}>{on && <Check />}</CheckBox>
                  {label}
                </CheckRow>
              ))}
            </ChecksList>
            <DimensionLabel>Dimensions</DimensionLabel>
          </SidePanel>
        </EditorBody>
        <StatusBar>
          <StatRow>
            <Stat $w={46}>Pads<br />85</Stat>
            <Stat $w={43}>Vias<br />0</Stat>
            <Stat $w={93}>Track Segments<br />105</Stat>
            <Stat $w={45}>Nets<br />38</Stat>
            <Stat $w={60}>Unrouted<br />0</Stat>
          </StatRow>
          <InfoRow>
            <InfoCell $w={57}>File Hide</InfoCell>
            <InfoCell $w={75}>Thermal</InfoCell>
            <InfoCell $w={252}>3D Viewer F.Cu / B.Cu</InfoCell>
            <InfoCell $w={58}>Z 7.61</InfoCell>
            <InfoCell $w={115}>X 105.5000  Y 82.5000</InfoCell>
            <InfoCell $w={225}>dx 106.5000  dy 82.5000  dist 136.8500</InfoCell>
            <InfoCell $w={385}>grid 0.5000</InfoCell>
            <InfoCell $w={30}>Select item(s)</InfoCell>
          </InfoRow>
        </StatusBar>
      </EditorWindow>

      <Viewer>
        <ViewerTitle>
          <Lights $left={6} $top={6}>
            <Light $color="#ec5f57" />
            <Light $color="#e5b130" />
            <Light $color="#5ec43f" />
          </Lights>
          3D Viewer
        </ViewerTitle>
        <Toolbar $height={29} $pad={2} $bg="#2b2b2b">{renderTools(viewerTools, Tool, Sep)}</Toolbar>
        <ViewerBody>
          <Scene>
            <SceneSvg viewBox="78 97 883 513" preserveAspectRatio="none">
              <Board />
              <AxisGizmo />
            </SceneSvg>
          </Scene>
          <Appearance>
            <PanelHead>Appearance</PanelHead>
            <ControlList>
              <ScrollTrack />
              {colorRows.map(([label, color]) => <ViewRow key={label} label={label} color={color} />)}
              <GroupGap $h={9} />
              {modelRows.map(([label, off]) => <ViewRow key={label} label={label} off={off} />)}
              <GroupGap $h={9} />
              {textRows.map(([label, off]) => <ViewRow key={label} label={label} off={off} />)}
              <GroupGap $h={9} />
              <ViewRow label="3D Axis" off />
              <PanelScroll />
            </ControlList>
            <PanelCheck><PanelBox />Use board stackup colors</PanelCheck>
            <PanelCheck><PanelBox />Use board editor</PanelCheck>
            <PanelRule />
            <PanelLabel>Presets (Ctrl+Tab):</PanelLabel>
            <SelectBox><BlueStep><Stepper /></BlueStep></SelectBox>
            <PanelLabel>Viewports (Option+Tab):</PanelLabel>
            <SelectBox><BlueStep><Stepper /></BlueStep></SelectBox>
          </Appearance>
        </ViewerBody>
        <ViewerStatus>
          <StatusCell $w={727}>Last render time 1 ms</StatusCell>
          <StatusCell $w={106}>dx 0.00</StatusCell>
          <StatusCell $w={106}>dy 0.00</StatusCell>
          <StatusCell $w={60}>zoom 0.73</StatusCell>
        </ViewerStatus>
      </Viewer>
      <Tooltip>Steam</Tooltip>
    </Desktop>
  );
}
